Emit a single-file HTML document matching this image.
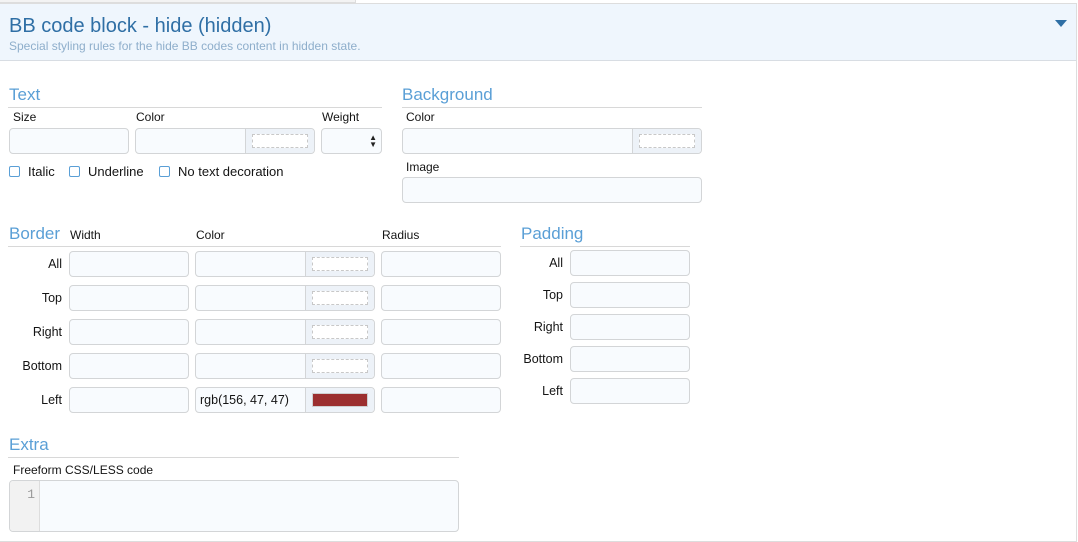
<!DOCTYPE html>
<html><head><meta charset="utf-8"><style>
*{box-sizing:border-box;margin:0;padding:0}
body{width:1078px;height:542px;background:#fff;position:relative;overflow:hidden;font-family:"Liberation Sans",sans-serif;color:#141414}
.a{position:absolute}
.hd{position:absolute;font-size:17px;color:#5a9fd6;line-height:20px}
.ln{position:absolute;height:1px;background:#d8d8d8}
.lb{position:absolute;font-size:12px;line-height:14px;color:#141414}
.rl{position:absolute;font-size:12.5px;line-height:14px;text-align:right;width:60px}
.in{position:absolute;height:26px;background:#f8fbfe;border:1px solid #d3d5d7;border-radius:4px}
.sw{position:absolute;top:0;bottom:0;right:0;width:69px;background:#edf2f8;border-left:1px solid #d3d5d7;border-radius:0 4px 4px 0}
.sw i{position:absolute;left:6px;right:6px;top:5px;bottom:5px;border:1px dashed #c8c8c8;background:#fff}
.cb{position:absolute;width:11px;height:11px;border:1px solid #5a9fd6;border-radius:2px;background:#fff}
</style></head><body>
<div class="a" style="left:0;top:0;width:356px;height:3px;background:#f3f3f3;border-bottom:1px solid #ddd;border-right:1px solid #ddd"></div>
<div class="a" style="left:0;top:3px;width:1077px;height:539px;border-top:1px solid #ddd;border-right:1px solid #ddd;border-bottom:1px solid #ddd"></div>
<div class="a" style="left:0;top:4px;width:1076px;height:57px;background:#eff6fd;border-bottom:1px solid #d8dde3"></div>
<div class="a" style="left:9px;top:14px;font-size:20px;line-height:24px;color:#2f6fa5">BB code block - hide (hidden)</div>
<div class="a" style="left:9px;top:39px;font-size:12px;line-height:14px;color:#8eaecb">Special styling rules for the hide BB codes content in hidden state.</div>
<div class="a" style="left:1055px;top:20px;width:0;height:0;border-left:6px solid transparent;border-right:6px solid transparent;border-top:7px solid #2f6fa5"></div>

<!-- Text -->
<div class="hd" style="left:9px;top:85px">Text</div>
<div class="ln" style="left:8px;top:107px;width:374px"></div>
<div class="lb" style="left:13px;top:110px">Size</div>
<div class="lb" style="left:136px;top:110px">Color</div>
<div class="lb" style="left:322px;top:110px">Weight</div>
<div class="in" style="left:9px;top:128px;width:120px"></div>
<div class="in" style="left:135px;top:128px;width:180px"><div class="sw"><i></i></div></div>
<div class="in" style="left:321px;top:128px;width:61px"><span class="a" style="right:4px;top:5px;font-size:8px;line-height:7px;color:#222">▲<br>▼</span></div>
<div class="cb" style="left:9px;top:166px"></div><div class="lb" style="left:28px;top:165px;font-size:13px">Italic</div>
<div class="cb" style="left:69px;top:166px"></div><div class="lb" style="left:88px;top:165px;font-size:13px">Underline</div>
<div class="cb" style="left:159px;top:166px"></div><div class="lb" style="left:178px;top:165px;font-size:13px">No text decoration</div>

<!-- Background -->
<div class="hd" style="left:402px;top:85px">Background</div>
<div class="ln" style="left:402px;top:107px;width:300px"></div>
<div class="lb" style="left:406px;top:110px">Color</div>
<div class="in" style="left:402px;top:128px;width:300px"><div class="sw"><i></i></div></div>
<div class="lb" style="left:406px;top:160px">Image</div>
<div class="in" style="left:402px;top:177px;width:300px"></div>

<!-- Border -->
<div class="hd" style="left:9px;top:224px">Border</div>
<div class="lb" style="left:70px;top:228px">Width</div>
<div class="lb" style="left:196px;top:228px">Color</div>
<div class="lb" style="left:382px;top:228px">Radius</div>
<div class="ln" style="left:8px;top:246px;width:493px"></div>

<div class="rl" style="left:2px;top:257px">All</div>
<div class="in" style="left:69px;top:251px;width:120px"></div>
<div class="in" style="left:195px;top:251px;width:180px"><div class="sw"><i></i></div></div>
<div class="in" style="left:381px;top:251px;width:120px"></div>

<div class="rl" style="left:2px;top:291px">Top</div>
<div class="in" style="left:69px;top:285px;width:120px"></div>
<div class="in" style="left:195px;top:285px;width:180px"><div class="sw"><i></i></div></div>
<div class="in" style="left:381px;top:285px;width:120px"></div>

<div class="rl" style="left:2px;top:325px">Right</div>
<div class="in" style="left:69px;top:319px;width:120px"></div>
<div class="in" style="left:195px;top:319px;width:180px"><div class="sw"><i></i></div></div>
<div class="in" style="left:381px;top:319px;width:120px"></div>

<div class="rl" style="left:2px;top:359px">Bottom</div>
<div class="in" style="left:69px;top:353px;width:120px"></div>
<div class="in" style="left:195px;top:353px;width:180px"><div class="sw"><i></i></div></div>
<div class="in" style="left:381px;top:353px;width:120px"></div>

<div class="rl" style="left:2px;top:393px">Left</div>
<div class="in" style="left:69px;top:387px;width:120px"></div>
<div class="in" style="left:195px;top:387px;width:180px"><span class="a" style="left:4px;top:5px;font-size:12.5px;line-height:14px">rgb(156, 47, 47)</span><div class="sw"><i style="background:#9c2f2f;border:1px solid #d0d0d0"></i></div></div>
<div class="in" style="left:381px;top:387px;width:120px"></div>

<!-- Padding -->
<div class="hd" style="left:521px;top:224px">Padding</div>
<div class="ln" style="left:520px;top:246px;width:170px"></div>
<div class="rl" style="left:503px;top:256px">All</div><div class="in" style="left:570px;top:250px;width:120px"></div>
<div class="rl" style="left:503px;top:288px">Top</div><div class="in" style="left:570px;top:282px;width:120px"></div>
<div class="rl" style="left:503px;top:320px">Right</div><div class="in" style="left:570px;top:314px;width:120px"></div>
<div class="rl" style="left:503px;top:352px">Bottom</div><div class="in" style="left:570px;top:346px;width:120px"></div>
<div class="rl" style="left:503px;top:384px">Left</div><div class="in" style="left:570px;top:378px;width:120px"></div>

<!-- Extra -->
<div class="hd" style="left:9px;top:435px">Extra</div>
<div class="ln" style="left:8px;top:457px;width:451px"></div>
<div class="lb" style="left:13px;top:463px">Freeform CSS/LESS code</div>
<div class="in" style="left:9px;top:480px;width:450px;height:52px;overflow:hidden"><div class="a" style="left:0;top:0;bottom:0;width:30px;background:#f2f2f2;border-right:1px solid #ddd;color:#999;font-family:'Liberation Mono',monospace;font-size:13px;text-align:right;padding:6px 4px 0 0">1</div></div>
</body></html>
